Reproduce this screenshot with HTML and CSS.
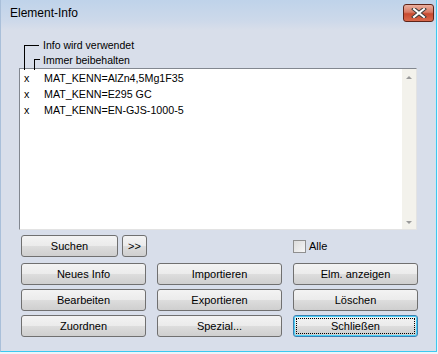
FILE: index.html
```html
<!DOCTYPE HTML>
<html>
    <head>
        <meta charset="UTF-8">
        <title>Element-Info</title>
        <link rel="stylesheet" href="styles.css">
    </head>
    <body>
        <div class="fenster">
            <div class="titel">
                <span>Element-Info</span>
                <div class="schliessen-x">
                    <svg width="16" height="10" viewBox="0 0 16 10">
                        <path d="M3 1 L13 9 M13 1 L3 9" stroke="#3b3b3b" stroke-width="4" stroke-linecap="square"/>
                        <path d="M3 1 L13 9 M13 1 L3 9" stroke="#fff" stroke-width="2" stroke-linecap="square"/>
                    </svg>
                </div>
            </div>
            <div class="inhalt">
                <div class="legende">
                    <div class="zeile1">Info wird verwendet</div>
                    <div class="zeile2">Immer beibehalten</div>
                </div>
                <div class="liste">
                    <div class="eintraege">
                        <div class="eintrag"><span class="mark">x</span>MAT_KENN=AlZn4,5Mg1F35</div>
                        <div class="eintrag"><span class="mark">x</span>MAT_KENN=E295 GC</div>
                        <div class="eintrag"><span class="mark">x</span>MAT_KENN=EN-GJS-1000-5</div>
                    </div>
                    <div class="scroll">
                        <span class="pfeil hoch"></span>
                        <span class="pfeil runter"></span>
                    </div>
                </div>
                <div class="suchzeile">
                    <button class="btn suchen">Suchen</button>
                    <button class="btn mehr">&gt;&gt;</button>
                    <label class="alle"><span class="box"></span>Alle</label>
                </div>
                <div class="knoepfe">
                    <button class="btn">Neues Info</button>
                    <button class="btn">Importieren</button>
                    <button class="btn">Elm. anzeigen</button>
                    <button class="btn">Bearbeiten</button>
                    <button class="btn">Exportieren</button>
                    <button class="btn">Löschen</button>
                    <button class="btn">Zuordnen</button>
                    <button class="btn">Spezial...</button>
                    <button class="btn standard"><span>Schließen</span></button>
                </div>
            </div>
        </div>
    </body>
</html>
```

FILE: styles.css
```css
body{
    margin: 0;
    background: #eef2f8;
    font-family: "Liberation Sans", Arial, sans-serif;
    font-size: 11px;
}
.fenster{
    width: 437px;
    height: 352px;
    background: #d8deea;
    border-left: 1px solid #a9bfd9;
    border-right: 1px solid #3cc8f0;
    border-bottom: 1px solid #3cc8f0;
    box-sizing: border-box;
}
.titel{
    height: 30px;
    display: flex;
    justify-content: space-between;
    align-items: flex-start;
    padding-left: 9px;
    background: linear-gradient(#bfd3ea, #cdd9ea 70%, #d8deea);
    font-size: 12px;
}
.titel span{
    margin-top: 6px;
}
.schliessen-x{
    width: 29px;
    height: 16px;
    margin: 4px 2px 0 0;
    border: 1px solid #5e2419;
    border-radius: 3px;
    background: linear-gradient(#eab0a0, #d87a64 45%, #c84a30 55%, #d9694c);
    display: flex;
    align-items: center;
    justify-content: center;
}
.inhalt{
    padding-left: 18px;
}
.legende{
    height: 38px;
    padding-top: 8px;
    box-sizing: border-box;
    font-size: 10.5px;
}
.zeile1, .zeile2{
    position: relative;
    height: 15px;
    line-height: 15px;
}
.zeile1{
    margin-left: 5px;
    padding-left: 19px;
}
.zeile2{
    margin-left: 15px;
    padding-left: 9px;
}
.zeile1::before, .zeile2::before{
    content: '';
    position: absolute;
    left: 0;
    border-left: 1px solid #000;
    border-top: 1px solid #000;
}
.zeile1::before{
    top: 7px;
    width: 14px;
    height: 24px;
}
.zeile2::before{
    top: 6px;
    width: 5px;
    height: 10px;
}
.liste{
    width: 398px;
    height: 162px;
    box-sizing: border-box;
    border: 1px solid #828790;
    border-right-color: #e3e3e3;
    border-bottom-color: #e3e3e3;
    background: #fff;
    display: flex;
    font-size: 10.7px;
}
.eintraege{
    flex: 1;
    padding-top: 1px;
}
.eintrag{
    height: 16px;
    line-height: 16px;
    display: flex;
}
.mark{
    width: 24px;
    padding-left: 4px;
    box-sizing: border-box;
}
.scroll{
    width: 14px;
    background: #f3f2ec;
    display: flex;
    flex-direction: column;
    justify-content: space-between;
    align-items: center;
    padding: 7px 0 5px;
}
.pfeil{
    width: 0;
    height: 0;
    border-left: 3px solid transparent;
    border-right: 3px solid transparent;
}
.hoch{
    border-bottom: 3px solid #9a9a9a;
}
.runter{
    border-top: 3px solid #9a9a9a;
}
.btn{
    height: 22px;
    margin: 0;
    padding: 0;
    border: 1px solid #707070;
    border-radius: 3px;
    background: linear-gradient(#f3f3f3, #ebebeb 50%, #dddddd 50%, #cfcfcf);
    font-family: "Liberation Sans", Arial, sans-serif;
    font-size: 11px;
    color: #000;
    cursor: pointer;
}
.suchzeile{
    display: flex;
    align-items: center;
    margin-top: 5px;
    padding-left: 2px;
}
.suchen{
    width: 97px;
}
.mehr{
    width: 25px;
    margin-left: 4px;
}
.alle{
    display: flex;
    align-items: center;
    margin-left: 146px;
}
.box{
    width: 11px;
    height: 11px;
    border: 1px solid #8f8f8f;
    background: linear-gradient(135deg, #dcdcdc, #f6f6f6);
    margin-right: 3px;
}
.knoepfe{
    display: grid;
    grid-template-columns: repeat(3, 125px);
    column-gap: 11px;
    row-gap: 4px;
    margin-top: 6px;
    padding-left: 2px;
}
.standard{
    border-color: #3c7fb1;
    box-shadow: 0 0 0 1px #48d0f8 inset;
    padding: 2px;
}
.standard span{
    display: flex;
    align-items: center;
    justify-content: center;
    height: 100%;
    border: 1px dotted #000;
    box-sizing: border-box;
}
```
